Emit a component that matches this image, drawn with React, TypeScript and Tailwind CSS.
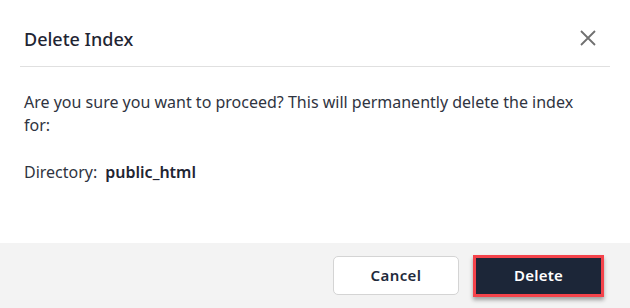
export default function App() {
  return (
    <div
      className="w-[630px] h-[308px] bg-white flex flex-col"
      style={{ fontFamily: '"Noto Sans", "Open Sans", sans-serif' }}
    >
      {/* Header */}
      <div className="mx-5 h-[67px] flex items-start justify-between border-b border-[#e0e0e0] pt-[27px] pl-1 pr-[14px]">
        <h2 className="text-[18px] leading-6 font-medium text-[#1f2533]">Delete Index</h2>
        <button className="text-[#707070] mt-[3px]">
          <svg width="16" height="16" viewBox="0 0 16 16" fill="none" stroke="currentColor" strokeWidth="1.8">
            <path d="M1 1L15 15M15 1L1 15" />
          </svg>
        </button>
      </div>

      {/* Body */}
      <div className="flex-1 pl-6 pr-10 pt-[24px] text-[16px] leading-[23px] text-[#2f3441]">
        <p>Are you sure you want to proceed? This will permanently delete the index for:</p>
        <p className="mt-[24px] flex gap-2">
          <span>Directory:</span>
          <span className="font-semibold text-[#1f2533]">public_html</span>
        </p>
      </div>

      {/* Footer */}
      <div className="h-[65px] bg-[#f3f3f3] flex items-center justify-end gap-[14px] pr-[26px]">
        <button className="w-[126px] h-[39px] rounded-[5px] border border-[#d4d4d4] bg-white text-[15px] font-semibold text-[#1f2a3c] tracking-[0.4px]">
          Cancel
        </button>
        <div className="border-[3px] border-[#f4434b] shadow-[0_3px_4px_rgba(0,0,0,0.35)]">
          <button className="w-[125px] h-[36px] bg-[#1c2638] text-[15px] font-semibold text-white tracking-[0.2px] flex items-center justify-center">
            Delete
          </button>
        </div>
      </div>
    </div>
  )
}
